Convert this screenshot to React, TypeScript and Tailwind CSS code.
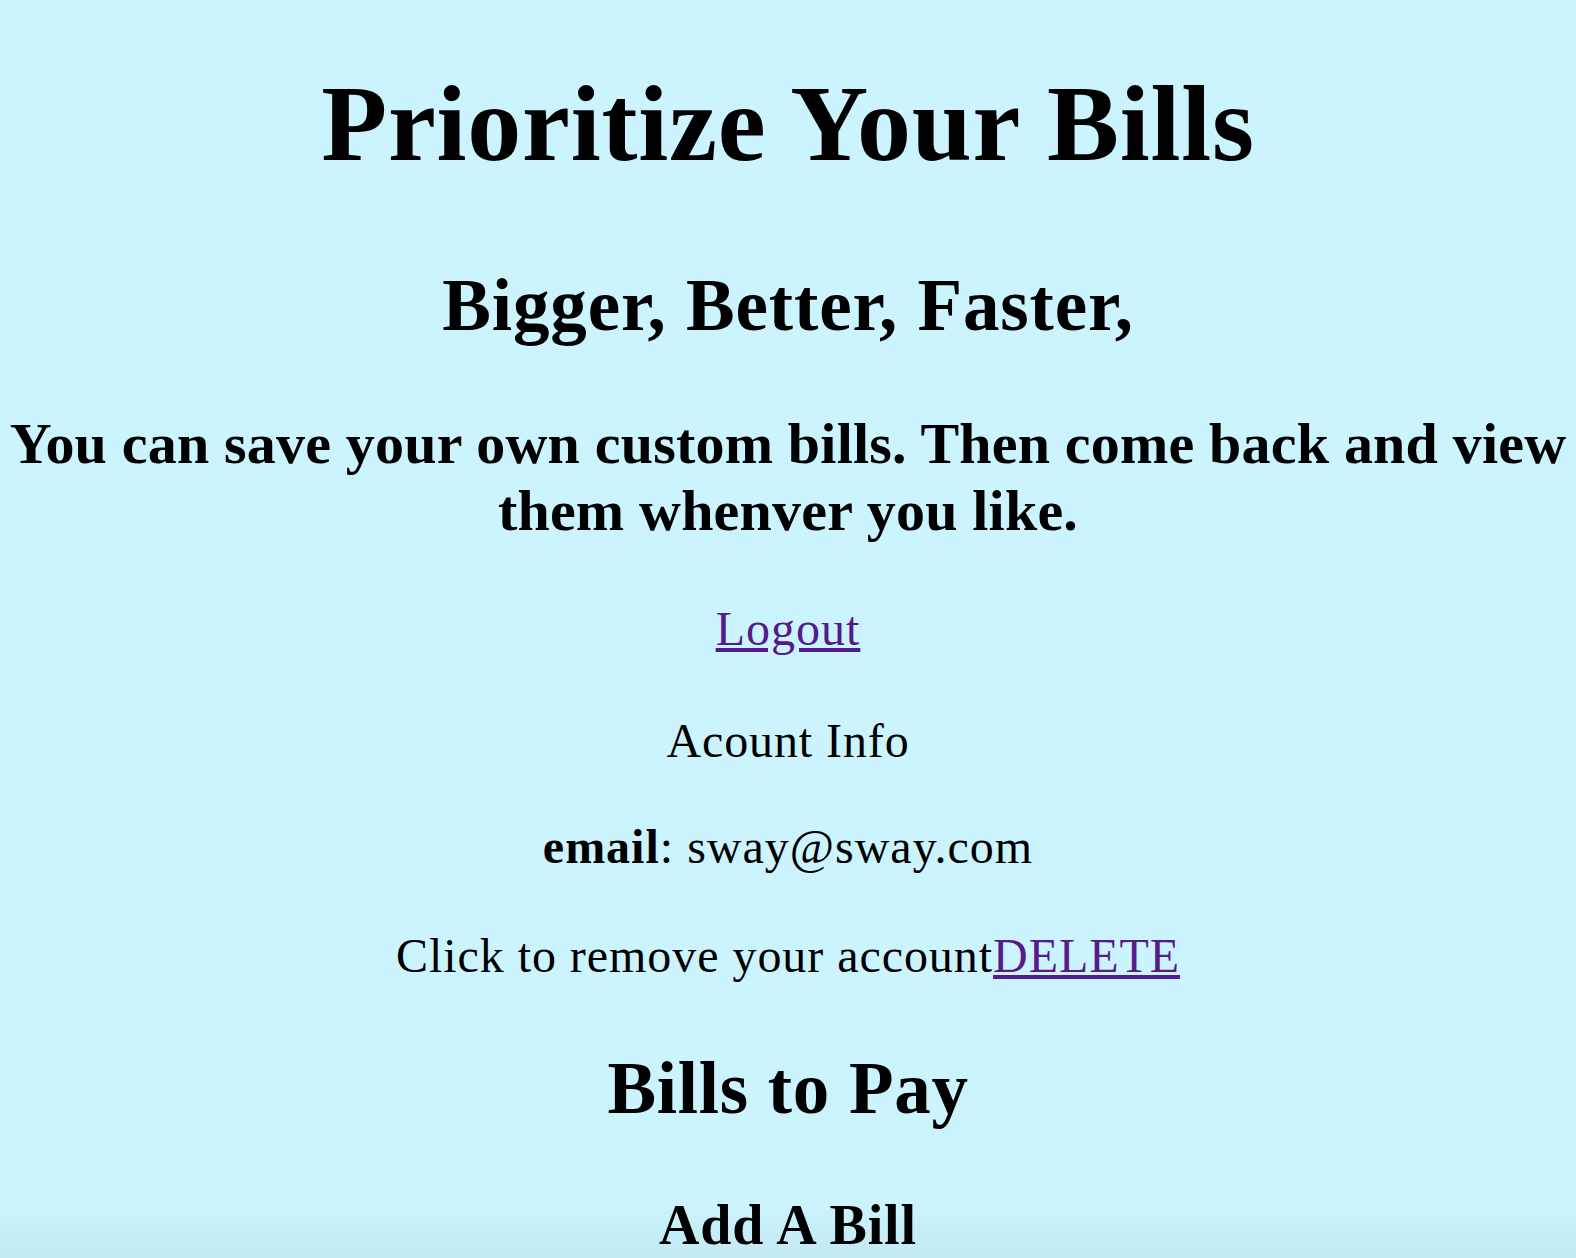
export default function App() {
  return (
    <div
      className="relative min-h-screen overflow-hidden bg-[#ccf4fe] text-black"
      style={{ fontFamily: '"Liberation Serif", "Times New Roman", serif' }}
    >
      <div className="flex flex-col items-center text-center">
        <h1 className="mt-16 text-[108px] leading-[120px] font-bold tracking-[0.75px]">
          Prioritize Your Bills
        </h1>
        <h2 className="mt-[80px] text-[73px] leading-[84px] font-bold tracking-[0.9px]">
          Bigger, Better, Faster,
        </h2>
        <h3 className="mt-[62px] text-[58px] leading-[67px] font-bold tracking-[0.2px]">
          You can save your own custom bills. Then come back and view them whenver you like.
        </h3>

        <p className="mt-[55px] text-[48px] leading-[60px] tracking-[1px]">
          <a href="#" className="text-[#551a8b] underline">
            Logout
          </a>
        </p>
        <p className="mt-[52px] text-[48px] leading-[60px] tracking-[0.9px]">Acount Info</p>
        <p className="mt-[46px] text-[48px] leading-[60px] tracking-[1px]">
          <b>email</b>: sway@sway.com
        </p>
        <p className="mt-[49px] text-[48px] leading-[60px] tracking-[0.95px]">
          Click to remove your account
          <a href="#" className="text-[#551a8b] underline">
            DELETE
          </a>
        </p>

        <h2 className="mt-[61px] text-[73px] leading-[84px] font-bold tracking-[0.7px]">
          Bills to Pay
        </h2>
        <h3 className="mt-[61px] text-[56px] leading-[66px] font-bold tracking-[0.9px]">
          Add A Bill
        </h3>
        <div className="h-40" />
      </div>

      {/* faint shade along the bottom edge */}
      <div className="pointer-events-none fixed inset-x-0 bottom-0 h-14 bg-linear-to-b from-transparent to-black/[0.04]" />
    </div>
  )
}
